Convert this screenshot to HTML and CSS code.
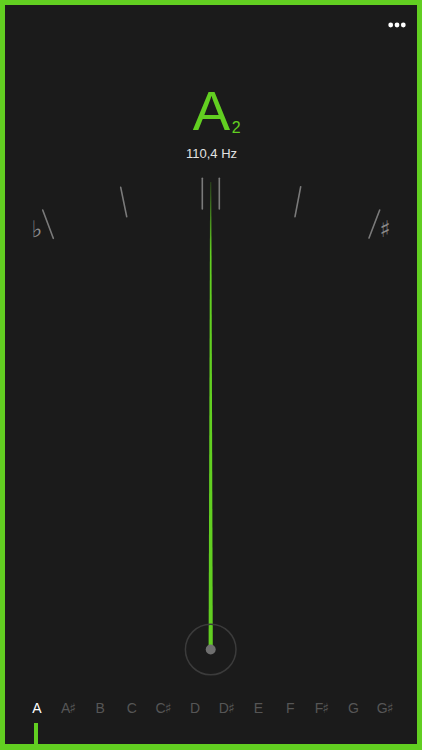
FILE: index.html
```html
<!DOCTYPE html>
<html>
<head>
<meta charset="utf-8">
<link rel="stylesheet" href="styles.css">
</head>
<body>
<div class="app">
  <div class="topbar">
    <svg class="more" width="18" height="6" viewBox="0 0 18 6"><circle cx="2.7" cy="3" r="2.4"/><circle cx="9" cy="3" r="2.4"/><circle cx="15.3" cy="3" r="2.4"/></svg>
  </div>
  <div class="pitch"><span class="name">A<span class="octave">2</span></span></div>
  <div class="hz">110,4 Hz</div>
  <svg class="meter" width="412" height="520" viewBox="5 165 412 520">
    <g class="ticks">
      <line x1="42.7" y1="210" x2="53.3" y2="238.3"/>
      <line x1="120.7" y1="187.3" x2="126.7" y2="216.7"/>
      <line x1="202.3" y1="178.3" x2="202.3" y2="209"/>
      <line x1="219.3" y1="178.3" x2="219.3" y2="209"/>
      <line x1="300.7" y1="186.7" x2="295" y2="216.7"/>
      <line x1="379.7" y1="210" x2="369" y2="238"/>
    </g>
    <text class="accidental" x="37" y="237">♭</text>
    <text class="accidental" x="385" y="237">♯</text>
    <defs>
      <linearGradient id="ng" x1="0" y1="0" x2="0" y2="1">
        <stop offset="0" stop-color="#62cf21" stop-opacity="0.2"/>
        <stop offset="0.15" stop-color="#62cf21" stop-opacity="1"/>
        <stop offset="1" stop-color="#62cf21"/>
      </linearGradient>
    </defs>
    <polygon class="needle" points="210.1,182 211.3,182 212.8,650 208.6,650" fill="url(#ng)"/>
    <circle class="ring" cx="210.7" cy="649.5" r="25.3"/>
    <circle class="pivot" cx="210.7" cy="649.5" r="5"/>
  </svg>
  <div class="notes">
    <span class="active">A</span>
    <span>A<small>♯</small></span>
    <span>B</span>
    <span>C</span>
    <span>C<small>♯</small></span>
    <span>D</span>
    <span>D<small>♯</small></span>
    <span>E</span>
    <span>F</span>
    <span>F<small>♯</small></span>
    <span>G</span>
    <span>G<small>♯</small></span>
  </div>
  <div class="indicator-row">
    <div class="indicator"></div>
  </div>
</div>
</body>
</html>
```

FILE: styles.css
```css
* { box-sizing: border-box; }
html, body {
  margin: 0;
  padding: 0;
  background: #1b1b1b;
}
body {
  font-family: "Liberation Sans", Arial, sans-serif;
}
.app {
  width: 422px;
  height: 750px;
  border: 5px solid #62cf21;
  border-bottom-width: 6px;
  background: #1b1b1b;
  display: flex;
  flex-direction: column;
  overflow: hidden;
}
.topbar {
  height: 78px;
  display: flex;
  justify-content: flex-end;
  align-items: flex-start;
  padding: 17px 11px 0 0;
}
.more { display: block; fill: #ffffff; }
.pitch {
  height: 56px;
  display: flex;
  justify-content: center;
}
.name {
  position: relative;
  font-size: 56px;
  line-height: 56px;
  color: #62cf21;
  margin-left: 1px;
}
.octave {
  position: absolute;
  left: 39px;
  top: 35px;
  font-size: 16px;
  line-height: 20px;
}
.hz {
  margin-top: 6.5px;
  height: 16px;
  font-size: 13px;
  line-height: 16px;
  color: #e2e2e2;
  text-align: center;
  padding-left: 1px;
}
.meter {
  display: block;
  margin-top: 3.5px;
  flex: none;
}
.ticks line {
  stroke: #7a7a7a;
  stroke-width: 1.6;
  stroke-linecap: round;
}
.accidental {
  font-family: "DejaVu Sans", sans-serif;
  font-size: 23px;
  fill: #8a8a8a;
  text-anchor: middle;
}
.ring {
  fill: none;
  stroke: #3b3b3b;
  stroke-width: 1.5;
}
.pivot { fill: #6f6f6f; }
.notes {
  margin-top: 13px;
  height: 20px;
  padding: 0 16px;
  display: grid;
  grid-template-columns: repeat(12, 1fr);
  font-size: 14px;
  line-height: 20px;
  color: #565656;
  text-align: center;
}
.notes small {
  font-family: "DejaVu Sans", sans-serif;
  font-size: 14px;
  margin-left: -1px;
}
.notes .active { color: #ffffff; }
.indicator-row {
  margin-top: 5px;
  flex: 1;
  padding: 0 16px;
  display: grid;
  grid-template-columns: repeat(12, 1fr);
}
.indicator {
  width: 4px;
  height: 100%;
  background: #62cf21;
  justify-self: center;
  margin-right: 2px;
}
```
